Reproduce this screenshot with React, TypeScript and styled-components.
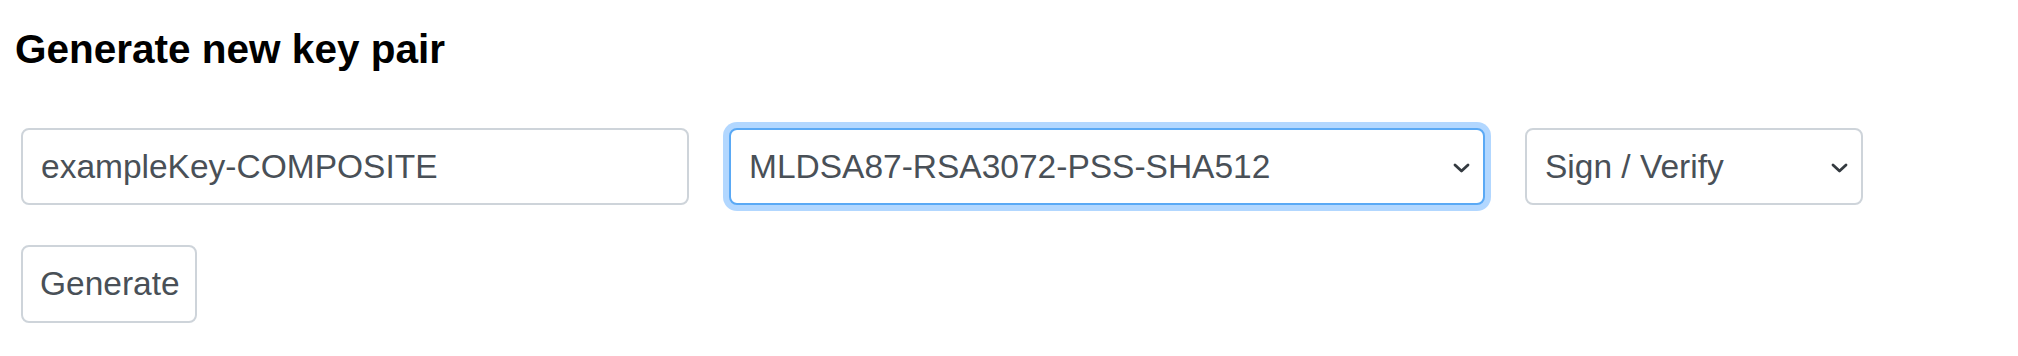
import React from "react";
import styled, { createGlobalStyle, css } from "styled-components";

const GlobalStyle = createGlobalStyle`
  html, body { margin: 0; padding: 0; background: #ffffff; }
  body { font-family: "Liberation Sans", Arial, sans-serif; color: #212529; }
  * { box-sizing: border-box; }
`;

const Page = styled.div`
  padding: 25px 0 0 15px;
  display: flex;
  flex-direction: column;
`;

const Heading = styled.h5`
  margin: 0 0 55px 0;
  font-size: 40.5px;
  line-height: 48px;
  font-weight: 700;
  color: #000000;
`;

const Form = styled.form`
  display: flex;
  flex-direction: column;
  gap: 40px;
  padding-left: 6px;
`;

const Row = styled.div`
  display: flex;
  align-items: center;
  gap: 40px;
`;

const fieldBase = css<{ $focused?: boolean }>`
  height: 77px;
  font-family: "Liberation Sans", Arial, sans-serif;
  font-size: 33.5px;
  color: #495057;
  background: #ffffff;
  border: 2px solid #ced4da;
  border-radius: 8px;
  outline: none;
  ${(p) =>
    p.$focused &&
    css`
      border-color: #5aa9f5;
      box-shadow: 0 0 0 6px rgba(0, 123, 255, 0.3);
    `}
`;

const TextInput = styled.input<{ $width: number }>`
  ${fieldBase};
  width: ${(p) => p.$width}px;
  padding: 0 18px;
`;

const SelectWrap = styled.div<{ $width: number }>`
  position: relative;
  width: ${(p) => p.$width}px;
`;

const Select = styled.select<{ $focused?: boolean }>`
  ${fieldBase};
  width: 100%;
  padding: 0 50px 0 18px;
  appearance: none;
  -webkit-appearance: none;
`;

const Chevron = styled.svg`
  position: absolute;
  right: 14px;
  top: 50%;
  width: 19px;
  height: 12px;
  margin-top: -5px;
  pointer-events: none;
`;

const Button = styled.button`
  height: 78px;
  width: 176px;
  padding: 0 17px;
  font-family: "Liberation Sans", Arial, sans-serif;
  font-size: 33.5px;
  color: #495057;
  background: #ffffff;
  border: 2px solid #ced4da;
  border-radius: 8px;
`;

const ChevronIcon = () => (
  <Chevron viewBox="0 0 19 12">
    <polyline
      points="3,3 9.5,9 16,3"
      fill="none"
      stroke="#343a40"
      strokeWidth="2.8"
      strokeLinecap="round"
      strokeLinejoin="round"
    />
  </Chevron>
);

export default function App() {
  return (
    <>
      <GlobalStyle />
      <Page>
        <Heading>Generate new key pair</Heading>
        <Form onSubmit={(e) => e.preventDefault()}>
          <Row>
            <TextInput $width={668} defaultValue="exampleKey-COMPOSITE" />
            <SelectWrap $width={756}>
              <Select $focused defaultValue="MLDSA87-RSA3072-PSS-SHA512">
                <option>MLDSA87-RSA3072-PSS-SHA512</option>
              </Select>
              <ChevronIcon />
            </SelectWrap>
            <SelectWrap $width={338}>
              <Select defaultValue="Sign / Verify">
                <option>Sign / Verify</option>
              </Select>
              <ChevronIcon />
            </SelectWrap>
          </Row>
          <Row>
            <Button type="submit">Generate</Button>
          </Row>
        </Form>
      </Page>
    </>
  );
}
